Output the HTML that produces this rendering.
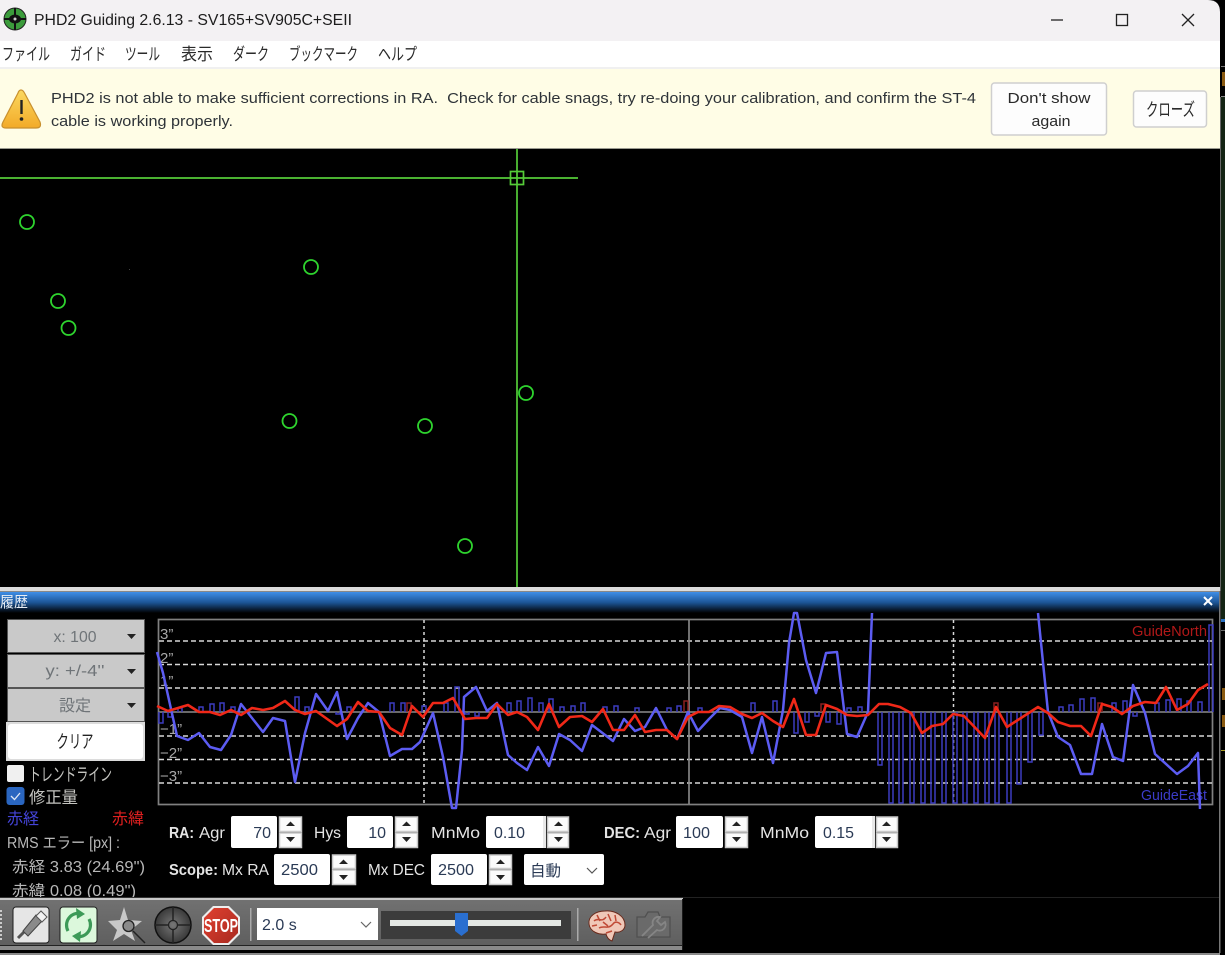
<!DOCTYPE html>
<html lang="ja">
<head>
<meta charset="utf-8">
<title>PHD2 Guiding</title>
<style>
html,body{margin:0;padding:0;background:#000;width:1225px;height:955px;overflow:hidden}
svg{display:block;position:absolute;left:0;top:0;filter:blur(.35px)}
text{font-family:"Liberation Sans","Noto Sans CJK JP",sans-serif;white-space:pre}
</style>
</head>
<body>
<svg width="1225" height="955" viewBox="0 0 1225 955" xmlns="http://www.w3.org/2000/svg">
<defs>
<linearGradient id="cap" x1="0" y1="0" x2="0" y2="1"><stop offset="0" stop-color="#3f8fe8"/><stop offset=".5" stop-color="#1c5596"/><stop offset="1" stop-color="#000"/></linearGradient>
<linearGradient id="warn" x1="0" y1="0" x2="0" y2="1"><stop offset="0" stop-color="#fbd860"/><stop offset="1" stop-color="#f2aa28"/></linearGradient>
<linearGradient id="tb" x1="0" y1="0" x2="0" y2="1"><stop offset="0" stop-color="#717171"/><stop offset="1" stop-color="#5f5f5f"/></linearGradient>
<radialGradient id="ret" cx=".5" cy=".5" r=".55"><stop offset="0" stop-color="#777"/><stop offset="1" stop-color="#333"/></radialGradient>
<linearGradient id="stop" x1="0" y1="0" x2="1" y2="1"><stop offset="0" stop-color="#e04030"/><stop offset="1" stop-color="#a82a20"/></linearGradient>
</defs>

<!-- right strip behind window -->
<rect x="1220" y="0" width="5" height="955" fill="#000"/>
<rect x="1221" y="66" width="4" height="1" fill="#777"/>
<rect x="1221" y="96" width="4" height="1" fill="#888"/>
<rect x="1222" y="72" width="3" height="14" fill="#8a5a10"/>
<rect x="1221" y="97" width="4" height="522" fill="#142414"/>
<rect x="1221" y="619" width="4" height="3" fill="#2a70c0"/>
<rect x="1220" y="97" width="1" height="494" fill="#666"/>
<rect x="1221" y="630" width="4" height="1" fill="#666"/>
<rect x="1222" y="688" width="3" height="12" fill="#8a5a10"/>
<rect x="1222" y="715" width="3" height="12" fill="#8a5a10"/>
<rect x="1221" y="750" width="4" height="1" fill="#a89a20"/>

<!-- title bar -->
<path d="M0 0H1208Q1220 0 1220 12V41H0Z" fill="#f3f1f3"/>
<rect x="0" y="41" width="1220" height="26" fill="#fff"/>
<rect x="0" y="67" width="1220" height="2" fill="#f0f0f0"/>
<circle cx="15" cy="19" r="11" fill="#3c9c3c" stroke="#222" stroke-width="1"/>
<path d="M4 19H26M15 8V30" stroke="#111" stroke-width="2"/>
<ellipse cx="15" cy="19" rx="6" ry="4.500" fill="#111"/><circle cx="15" cy="19" r="1.500" fill="#ccc"/>
<text x="34" y="25" font-size="15.500" fill="#1c1c1c" textLength="318" lengthAdjust="spacingAndGlyphs">PHD2 Guiding 2.6.13 - SV165+SV905C+SEII</text>
<path d="M1051 20H1063" stroke="#222" stroke-width="1.300"/>
<rect x="1116.500" y="14.500" width="11" height="11" fill="none" stroke="#222" stroke-width="1.300"/>
<path d="M1182 14L1194 26M1194 14L1182 26" stroke="#222" stroke-width="1.300"/>

<!-- menu -->
<g font-size="17" fill="#2a2a2a">
<text x="2" y="60" textLength="48" lengthAdjust="spacingAndGlyphs">ファイル</text>
<text x="70" y="60" textLength="36" lengthAdjust="spacingAndGlyphs">ガイド</text>
<text x="125" y="60" textLength="35" lengthAdjust="spacingAndGlyphs">ツール</text>
<text x="181" y="60" textLength="32" lengthAdjust="spacingAndGlyphs">表示</text>
<text x="233" y="60" textLength="36" lengthAdjust="spacingAndGlyphs">ダーク</text>
<text x="289" y="60" textLength="69" lengthAdjust="spacingAndGlyphs">ブックマーク</text>
<text x="378" y="60" textLength="39" lengthAdjust="spacingAndGlyphs">ヘルプ</text>
</g>

<!-- notification -->
<rect x="0" y="69" width="1220" height="79" fill="#fffde6"/>
<rect x="0" y="148" width="1220" height="1" fill="#9a9a90"/>
<path d="M21 90Q23 90 24.500 93L40 122Q42 128 36 128H6Q0 128 3 122L18 93Q19 90 21 90Z" fill="url(#warn)" stroke="#c8902e" stroke-width="1.200"/>
<path d="M21.500 100V114" stroke="#222" stroke-width="2.400"/><circle cx="21.500" cy="119" r="1.800" fill="#222"/>
<text x="51" y="103" font-size="15" fill="#2e3338" textLength="925" lengthAdjust="spacingAndGlyphs">PHD2 is not able to make sufficient corrections in RA.  Check for cable snags, try re-doing your calibration, and confirm the ST-4</text>
<text x="51" y="126" font-size="15" fill="#2e3338" textLength="182" lengthAdjust="spacingAndGlyphs">cable is working properly.</text>
<rect x="991.500" y="83" width="115" height="52" rx="3" fill="#fdfdfd" stroke="#cfcfcf" stroke-width="1.500"/>
<text x="1049" y="103" font-size="15" fill="#2a2a2a" text-anchor="middle" textLength="83" lengthAdjust="spacingAndGlyphs">Don't show</text>
<text x="1051" y="126" font-size="15" fill="#2a2a2a" text-anchor="middle" textLength="39" lengthAdjust="spacingAndGlyphs">again</text>
<rect x="1133.500" y="91" width="73" height="36" rx="3" fill="#fdfdfd" stroke="#cfcfcf" stroke-width="1.500"/>
<text x="1146" y="116" font-size="18" fill="#2a2a2a" textLength="49" lengthAdjust="spacingAndGlyphs">クローズ</text>

<!-- star field -->
<g fill="none" stroke="#2ed42e" stroke-width="1.800">
<circle cx="27" cy="222" r="7"/><circle cx="311" cy="267" r="7"/><circle cx="58" cy="301" r="7"/><circle cx="68.500" cy="328" r="7"/>
<circle cx="526" cy="393" r="7"/><circle cx="289.500" cy="421" r="7"/><circle cx="425" cy="426" r="7"/><circle cx="465" cy="546" r="7"/>
</g>
<g stroke="#55cc38" stroke-width="1.700" fill="none">
<path d="M0 178H578M517 149V587"/>
<rect x="510.500" y="171.500" width="13" height="13"/>
</g>
<rect x="129" y="269" width="1" height="1" fill="#444"/>

<!-- history pane caption -->
<rect x="0" y="587" width="1220" height="4" fill="#dcdcdc"/>
<rect x="0" y="591" width="1220" height="1" fill="#888"/>
<rect x="0" y="592" width="1219" height="21" fill="url(#cap)"/>
<text x="0" y="607" font-size="15" fill="#e8eef5" textLength="28" lengthAdjust="spacingAndGlyphs">履歴</text>
<path d="M1204 597L1212 605M1212 597L1204 605" stroke="#fff" stroke-width="2"/>
<rect x="1219" y="591" width="1.500" height="362" fill="#777"/>

<!-- left controls -->
<g fill="#c9c9c9" stroke="#555" stroke-width="1">
<rect x="7.500" y="619.500" width="137" height="33"/>
<rect x="7.500" y="654.500" width="137" height="33"/>
<rect x="7.500" y="688.500" width="137" height="33"/>
</g>
<g font-size="16" fill="#6f7478" text-anchor="middle">
<text x="75" y="642" textLength="43" lengthAdjust="spacingAndGlyphs">x: 100</text>
<text x="75" y="676" textLength="59" lengthAdjust="spacingAndGlyphs">y: +/-4''</text>
<text x="75" y="711">設定</text>
</g>
<path d="M127 634H136L131.500 639ZM127 669H136L131.500 674ZM127 703H136L131.500 708Z" fill="#222"/>
<rect x="6" y="722" width="139" height="39" fill="#dcdcdc"/>
<rect x="8" y="724" width="135" height="35" rx="3" fill="#fff"/>
<text x="56.500" y="748" font-size="18" fill="#222" textLength="37" lengthAdjust="spacingAndGlyphs">クリア</text>
<rect x="7" y="765" width="17" height="17" rx="2" fill="#f0f0f0"/>
<rect x="6.500" y="787" width="18" height="18" rx="3" fill="#2a66c0"/>
<path d="M11 796L14.500 799.500L20 793" fill="none" stroke="#dfe8f5" stroke-width="1.300"/>
<text x="29" y="781" font-size="18" fill="#c4c4c0" textLength="83" lengthAdjust="spacingAndGlyphs">トレンドライン</text>
<text x="29" y="803" font-size="16.500" fill="#c4c4c0" textLength="49" lengthAdjust="spacingAndGlyphs">修正量</text>
<text x="7" y="824" font-size="16" fill="#4444d8" textLength="32" lengthAdjust="spacingAndGlyphs">赤経</text>
<text x="112" y="824" font-size="16" fill="#e02020" textLength="32" lengthAdjust="spacingAndGlyphs">赤緯</text>
<text x="7" y="848" font-size="15.500" fill="#b8b8b8" textLength="113" lengthAdjust="spacingAndGlyphs">RMS エラー [px] :</text>
<text x="12" y="872" font-size="15.500" fill="#b8b8b8" textLength="133" lengthAdjust="spacingAndGlyphs">赤経 3.83 (24.69")</text>
<text x="12" y="896" font-size="15.500" fill="#b8b8b8" textLength="124" lengthAdjust="spacingAndGlyphs">赤緯 0.08 (0.49")</text>

<!-- graph -->
<rect x="158.500" y="619.500" width="1054" height="185" fill="none" stroke="#808080" stroke-width="1.700"/>
<path d="M159 641H1212M159 664.500H1212M159 688H1212M159 736H1212M159 759.500H1212M159 783H1212" fill="none" stroke="#d8d8d8" stroke-width="1.500" stroke-dasharray="5 3"/>
<path d="M424 620V804M953.500 620V804" fill="none" stroke="#d8d8d8" stroke-width="1.500" stroke-dasharray="3 3"/>
<path d="M159 712H1212M689 620V804" stroke="#8c8c8c" stroke-width="1.600" fill="none"/>
<g font-size="15" fill="#a8a8a8">
<text x="160" y="639">3”</text><text x="160" y="663">2”</text><text x="160" y="686">1”</text>
<text x="160" y="734">−1”</text><text x="160" y="758">−2”</text><text x="160" y="781">−3”</text>
</g>
<text x="1132" y="636" font-size="14.500" fill="#b01818" textLength="75" lengthAdjust="spacingAndGlyphs">GuideNorth</text>
<text x="1141" y="800" font-size="14.500" fill="#3c3cc8" textLength="66" lengthAdjust="spacingAndGlyphs">GuideEast</text>

<!-- corrections -->
<path fill="none" stroke="#3c3cc0" stroke-width="1.500" d="
M159 712V723H163V712 M168 712V717H172V712 M178 712V708H182V712 M199 712V707H203V712 M210 712V704H214V712 M220 712V703H224V712 M231 712V707H235V712 M295 712V697H299V712 M305 712V707H309V712 M336 712V714H340V712 M347 712V707H351V712 M390 712V703H394V712 M401 712V703H405V712
M422 712V706H426V712 M444 712V703H448V712 M455 712V687H459V712 M465 712V714H469V712 M475 712V716H479V712 M507 712V703H511V712 M517 712V701H521V712 M528 712V698H532V712 M539 712V703H543V712 M549 712V699H553V712 M560 712V707H564V712 M571 712V706H575V712 M581 712V703H585V712 M603 712V707H607V712 M614 712V706H618V712 M635 712V708H639V712 M667 712V708H671V712 M677 712V706H681V712 M698 712V708H702V712 M751 712V703H755V712 M773 712V701H777V712
M794 712V733H798V712 M805 712V722H809V712 M815 712V716H819V712 M826 712V722H830V712 M837 712V724H841V712 M847 712V708H851V712 M858 712V707H862V712
M878 712V765H882V712 M889 712V803H893V712 M899 712V803H903V712 M910 712V803H914V712 M921 712V803H925V712 M931 712V803H935V712 M942 712V803H946V712 M953 712V803H957V712 M963 712V803H967V712 M974 712V803H978V712 M985 712V803H989V712 M995 712V803H999V712 M1007 712V803H1011V712 M1017 712V784H1021V712 M1028 712V762H1032V712 M1039 712V735H1043V712
M1059 712V707H1063V712 M1069 712V705H1073V712 M1080 712V699H1084V712 M1091 712V698H1095V712 M1112 712V703H1116V712 M1123 712V701H1127V712 M1133 712V716H1137V712 M1155 712V703H1159V712 M1166 712V700H1170V712 M1177 712V699H1181V712 M1187 712V701H1191V712 M1198 712V702H1202V712 M1209 712V625H1213V712"/>
<path fill="none" stroke="#8c2020" stroke-width="1.500" d="M407 712V703H411V712 M684 712V701H688V712 M821 712V704H825V712 M994 712V703H998V712 M1098 712V703H1102V712"/>

<!-- RA line -->
<polyline fill="none" stroke="#5c5cf2" stroke-width="2.500" stroke-linejoin="round" points="157,652 163,673 177,736 188,740 199,733 210,747 221,750 231,735 241,704 263,732 273,718 285,721 295,782 305,733 316,694 328,711 337,692 347,739 358,718 368,703 379,712 390,756 402,749 412,749 420,742 433,713 443,757 452,808 456,808 462,750 464,697 476,687 487,711 497,703 508,755 517,763 527,770 538,747 549,766 559,734 570,740 582,751 592,725 613,741 624,719 635,731 645,727 656,708 667,730 677,739 688,712 698,731 709,719 720,708 730,710 742,717 752,753 762,717 773,763 783,710 789,643 794,613 797,613 806,660 816,693 826,653 837,652 847,734 857,737 868,712 872,613"/>
<polyline fill="none" stroke="#5c5cf2" stroke-width="2.500" stroke-linejoin="round" points="1038,613 1048,712 1058,737 1070,745 1081,774 1092,774 1102,724 1113,757 1123,761 1133,685 1145,713 1155,754 1177,774 1188,766 1198,753 1200,809"/>
<!-- Dec line -->
<polyline fill="none" stroke="#f02818" stroke-width="2.600" stroke-linejoin="round" points="157,706 168,711 188,705 199,712 210,712 220,715 231,710 241,715 252,708 263,710 273,708 285,701 295,710 305,714 316,711 337,726 347,719 358,702 368,711 379,712 390,728 402,735 412,706 423,717 433,703 443,703 453,698 465,719 476,718 487,718 497,704 508,715 517,712 527,717 538,730 549,704 559,727 570,717 582,716 592,722 603,709 613,730 624,730 635,715 645,732 656,730 667,730 677,739 688,717 698,712 709,712 719,706 730,707 742,714 752,718 762,713 773,721 783,727 794,699 806,735 816,735 826,705 837,709 847,715 857,716 868,715 879,704 888,704 900,707 911,713 922,733 932,726 943,724 953,714 964,716 985,738 996,707 1007,727 1038,707 1048,713 1058,722 1070,726 1081,726 1091,736 1102,704 1112,707 1122,714 1133,706 1145,702 1156,703 1166,687 1177,710 1188,704 1198,690 1208,684"/>

<!-- spinner labels -->
<g font-size="16" fill="#e4e4e4">
<text x="169" y="838" font-weight="bold" textLength="25" lengthAdjust="spacingAndGlyphs">RA:</text>
<text x="199" y="838" textLength="26" lengthAdjust="spacingAndGlyphs">Agr</text>
<text x="314" y="838" textLength="27" lengthAdjust="spacingAndGlyphs">Hys</text>
<text x="431" y="838" textLength="49" lengthAdjust="spacingAndGlyphs">MnMo</text>
<text x="604" y="838" font-weight="bold" textLength="36" lengthAdjust="spacingAndGlyphs">DEC:</text>
<text x="644" y="838" textLength="27" lengthAdjust="spacingAndGlyphs">Agr</text>
<text x="760" y="838" textLength="49" lengthAdjust="spacingAndGlyphs">MnMo</text>
<text x="169" y="875" font-weight="bold" textLength="49" lengthAdjust="spacingAndGlyphs">Scope:</text>
<text x="222" y="875" textLength="47" lengthAdjust="spacingAndGlyphs">Mx RA</text>
<text x="368" y="875" textLength="57" lengthAdjust="spacingAndGlyphs">Mx DEC</text>
</g>

<!-- fields -->
<g fill="#fff">
<rect x="231" y="816" width="46" height="32" rx="2"/>
<rect x="347" y="816" width="46" height="32" rx="2"/>
<rect x="486" y="816" width="60" height="32" rx="2"/>
<rect x="676" y="816" width="47" height="32" rx="2"/>
<rect x="815" y="816" width="60" height="32" rx="2"/>
<rect x="274" y="854" width="56" height="31" rx="2"/>
<rect x="431" y="854" width="56" height="31" rx="2"/>
<rect x="524" y="854" width="80" height="31" rx="2"/>
</g>
<rect x="543" y="816" width="3" height="32" fill="#e8e8e8"/>
<rect x="872" y="816" width="3" height="32" fill="#e8e8e8"/>
<g font-size="16" fill="#2a3a55">
<text x="271" y="838" text-anchor="end">70</text>
<text x="386" y="838" text-anchor="end">10</text>
<text x="494" y="838" textLength="31" lengthAdjust="spacingAndGlyphs">0.10</text>
<text x="683" y="838" textLength="27" lengthAdjust="spacingAndGlyphs">100</text>
<text x="823" y="838" textLength="31" lengthAdjust="spacingAndGlyphs">0.15</text>
<text x="281" y="875" textLength="37" lengthAdjust="spacingAndGlyphs">2500</text>
<text x="438" y="875" textLength="36" lengthAdjust="spacingAndGlyphs">2500</text>
<text x="530" y="876" font-size="15.500" textLength="31" lengthAdjust="spacingAndGlyphs">自動</text>
</g>
<path d="M587 868L592 873L597 868" fill="none" stroke="#555" stroke-width="1.200"/>

<!-- spinners -->
<g fill="#fbfbfb" stroke="#c8c8c8" stroke-width="1.500">
<rect x="279.500" y="817" width="22" height="14.500"/><rect x="279.500" y="833" width="22" height="14.500"/>
<rect x="395.500" y="817" width="22" height="14.500"/><rect x="395.500" y="833" width="22" height="14.500"/>
<rect x="547.500" y="817" width="21" height="14.500"/><rect x="547.500" y="833" width="21" height="14.500"/>
<rect x="725.500" y="817" width="22" height="14.500"/><rect x="725.500" y="833" width="22" height="14.500"/>
<rect x="876.500" y="817" width="21" height="14.500"/><rect x="876.500" y="833" width="21" height="14.500"/>
<rect x="332.500" y="855" width="23" height="13.500"/><rect x="332.500" y="870" width="23" height="14.500"/>
<rect x="489.500" y="855" width="22" height="13.500"/><rect x="489.500" y="870" width="22" height="14.500"/>
</g>
<path fill="#222" d="M286 826H295L290.500 821.500Z M286 837H295L290.500 842Z M402 826H411L406.500 821.500Z M402 837H411L406.500 842Z M554 826H563L558.500 821.500Z M554 837H563L558.500 842Z M732 826H741L736.500 821.500Z M732 837H741L736.500 842Z M882 826H891L886.500 821.500Z M882 837H891L886.500 842Z M339 864H348L343.500 859.500Z M339 875H348L343.500 880Z M496 864H505L500.500 859.500Z M496 875H505L500.500 880Z"/>

<!-- window bottom border / toolbar -->
<rect x="683" y="897" width="536" height="1" fill="#222"/>
<rect x="0" y="897" width="683" height="1" fill="#333"/>
<rect x="0" y="898" width="683" height="2" fill="#c8c8c8"/>
<rect x="0" y="900" width="682" height="45" fill="url(#tb)"/>
<rect x="0" y="945" width="683" height="1" fill="#222"/>
<rect x="0" y="946" width="683" height="4" fill="#8a8a8a"/>
<rect x="682" y="899" width="1" height="51" fill="#1a1a1a"/>
<rect x="0" y="953" width="1220" height="2" fill="#8a8a8a"/>
<path d="M1 910V940" stroke="#ccc" stroke-width="2" stroke-dasharray="2 2"/>

<!-- plug -->
<rect x="13" y="907" width="36" height="36" rx="3" fill="#e6e6e6" stroke="#1e1e1e" stroke-width="1"/>
<path d="M18 938L24 932" stroke="#555" stroke-width="3"/>
<path d="M23 931L36 915L42 921L28 936Z" fill="#8a8a8a" stroke="#444" stroke-width="1"/>
<path d="M36 916L41 911L47 917L42 922Z" fill="#f2f2f2" stroke="#555" stroke-width="1"/>
<!-- loop -->
<rect x="60" y="907" width="37" height="36" rx="3" fill="#dcf8dc" stroke="#1e1e1e" stroke-width="1"/>
<path d="M68 931A12 12 0 0 1 81 913.500" fill="none" stroke="#3d9a58" stroke-width="3.200"/>
<path d="M76 908L85 914L77 919Z" fill="#3d9a58"/>
<path d="M89 919A12 12 0 0 1 76 936.500" fill="none" stroke="#3d9a58" stroke-width="3.200"/>
<path d="M81 931L72 936L80 942Z" fill="#3d9a58"/>
<!-- star select -->
<path d="M124 907L128 920L142 921L131 930L135 941L124 934L113 941L117 930L108 921L120 920Z" fill="#c8c8c8"/>
<circle cx="128.500" cy="926" r="5.500" fill="#8a8a8a" stroke="#222" stroke-width="1.300"/>
<path d="M133 931L145 943" stroke="#222" stroke-width="1.500"/>
<!-- reticle -->
<circle cx="173" cy="925" r="18" fill="url(#ret)" stroke="#111" stroke-width="1.500"/>
<path d="M155 925H168M178 925H191M173 907V920M173 930V943" stroke="#222" stroke-width="1.500"/>
<circle cx="173" cy="925" r="4.500" fill="none" stroke="#222" stroke-width="1.300"/>
<!-- stop -->
<path d="M213 906H229L240 917V934L229 945H213L202 934V917Z" fill="#eee"/>
<path d="M214 908H228L238 918V933L228 943H214L204 933V918Z" fill="url(#stop)"/>
<text x="204" y="932" font-size="18" font-weight="bold" fill="#fff" textLength="34" lengthAdjust="spacingAndGlyphs">STOP</text>
<rect x="250" y="908" width="1.500" height="33" fill="#aaa"/>

<!-- exposure -->
<rect x="257" y="908" width="121" height="32" fill="#fff"/>
<text x="262" y="930" font-size="16" fill="#2a3a55">2.0 s</text>
<path d="M361 922L366 927L371 922" fill="none" stroke="#666" stroke-width="1.200"/>
<rect x="381" y="911" width="190" height="28" fill="#3c3c3c"/>
<rect x="390" y="920" width="171" height="6" fill="#e4e8e4"/>
<path d="M455 913H468V931L461.500 936L455 931Z" fill="#2a6fd0"/>
<rect x="577" y="908" width="1.500" height="33" fill="#aaa"/>

<!-- brain -->
<path d="M589 924C588 916 596 911 605 911C615 910 625 916 625 925C625 930 620 933 615 932L612 941C609 940 607 938 606 934C599 935 590 932 589 924Z" fill="#f0c8b8" stroke="#6a2a1c" stroke-width="1"/>
<path d="M594 921C598 917 602 923 606 917M599 928C604 925 608 930 613 924C615 921 619 922 621 925M608 914L611 921M597 915L600 921M606 933L612 931M592 926L597 925M603 922L608 926M615 915L616 921" fill="none" stroke="#c04a36" stroke-width="1.500"/>
<!-- camera wrench -->
<path d="M637 917H645L648 912H658L660 917H670V937H637Z" fill="#6a6a6a" stroke="#505050" stroke-width="1.300"/>
<path d="M642 936L653 925A6 6 0 0 1 660 917L657 921L661 925L665 922A6 6 0 0 1 657 930L648 938" fill="none" stroke="#858585" stroke-width="1.800"/>
</svg>
</body>
</html>
